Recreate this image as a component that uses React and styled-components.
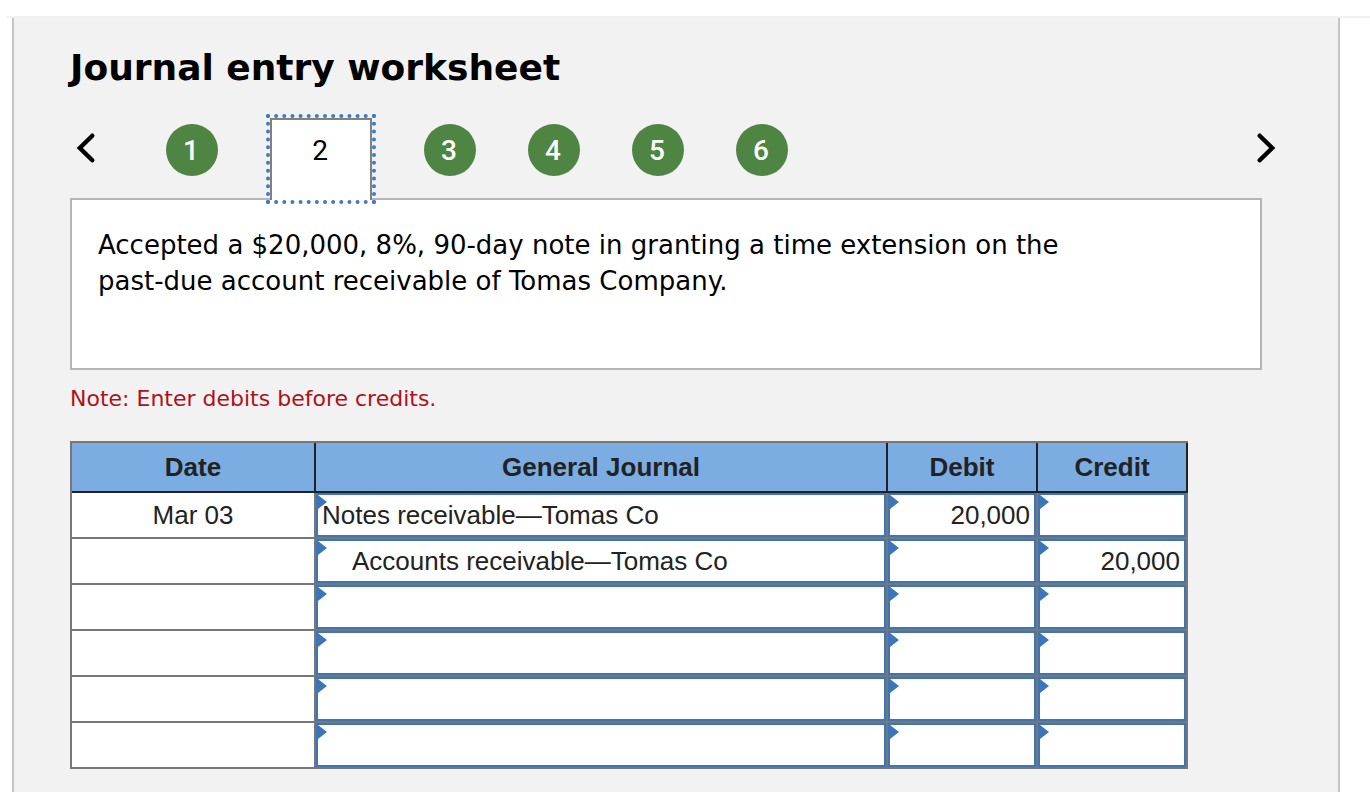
import React, { useState } from "react"
import styled, { createGlobalStyle } from "styled-components"

const steps = [1, 2, 3, 4, 5, 6]

const initialRows = [
  { date: "Mar 03", account: "Notes receivable—Tomas Co", debit: "20,000", credit: "" },
  { date: "", account: "Accounts receivable—Tomas Co", indent: true, debit: "", credit: "20,000" },
  { date: "", account: "", debit: "", credit: "" },
  { date: "", account: "", debit: "", credit: "" },
  { date: "", account: "", debit: "", credit: "" },
  { date: "", account: "", debit: "", credit: "" },
]

const App = () => {
  const [current, setCurrent] = useState(2)
  const [rows, setRows] = useState(initialRows)

  const update = (index, field, value) =>
    setRows(rows.map((row, i) => (i === index ? { ...row, [field]: value } : row)))

  return (
    <>
      <GlobalStyle />
      <TopRule />
      <Panel>
        <Heading>Journal entry worksheet</Heading>
        <StepBar aria-label="Transactions">
          <ArrowButton
            type="button"
            aria-label="Previous"
            onClick={() => setCurrent(Math.max(1, current - 1))}
          >
            <Arrow viewBox="0 0 20 32">
              <path d="M16.3 3.7 L3.8 16 L16.3 28.3" />
            </Arrow>
          </ArrowButton>
          {steps.map((step) =>
            step === current ? (
              <ActiveStep key={step} type="button" aria-current="step">
                {step}
              </ActiveStep>
            ) : (
              <Step key={step} type="button" onClick={() => setCurrent(step)}>
                {step}
              </Step>
            )
          )}
          <ArrowButton
            $end
            type="button"
            aria-label="Next"
            onClick={() => setCurrent(Math.min(steps.length, current + 1))}
          >
            <Arrow viewBox="0 0 20 32">
              <path d="M3.7 3.7 L16.2 16 L3.7 28.3" />
            </Arrow>
          </ArrowButton>
        </StepBar>
        <Prompt>
          <PromptText>
            Accepted a $20,000, 8%, 90-day note in granting a time extension on the
            past-due account receivable of Tomas Company.
          </PromptText>
        </Prompt>
        <Note>Note: Enter debits before credits.</Note>
        <Table>
          <colgroup>
            <Col $width="244px" />
            <Col />
            <Col $width="150px" />
            <Col $width="150px" />
          </colgroup>
          <thead>
            <tr>
              <HeadCell>Date</HeadCell>
              <HeadCell>General Journal</HeadCell>
              <HeadCell>Debit</HeadCell>
              <HeadCell>Credit</HeadCell>
            </tr>
          </thead>
          <tbody>
            {rows.map((row, index) => (
              <tr key={index}>
                <DateCell>{row.date}</DateCell>
                <EntryCell>
                  <EntryInput
                    aria-label={`General journal, line ${index + 1}`}
                    value={row.account}
                    $indent={row.indent}
                    onChange={(e) => update(index, "account", e.target.value)}
                  />
                </EntryCell>
                <EntryCell>
                  <EntryInput
                    $amount
                    aria-label={`Debit, line ${index + 1}`}
                    value={row.debit}
                    onChange={(e) => update(index, "debit", e.target.value)}
                  />
                </EntryCell>
                <EntryCell>
                  <EntryInput
                    $amount
                    aria-label={`Credit, line ${index + 1}`}
                    value={row.credit}
                    onChange={(e) => update(index, "credit", e.target.value)}
                  />
                </EntryCell>
              </tr>
            ))}
          </tbody>
        </Table>
      </Panel>
    </>
  )
}

export default App

const GlobalStyle = createGlobalStyle`
  * {
    box-sizing: border-box;
  }
  body {
    margin: 0;
    background: #fff;
    color: #000;
    font-family: Verdana, "DejaVu Sans", sans-serif;
  }
  #root {
    display: flex;
    flex-direction: column;
    min-height: 100vh;
    padding-top: 16px;
  }
`
const TopRule = styled.div`
  height: 2px;
  margin-left: 6px;
  background: #f1f1f1;
`
const Panel = styled.main`
  flex: 1;
  margin: 0 30px 0 12px;
  padding: 26px 76px 23px 56px;
  background: #f2f2f2;
  border: solid #c4c4c4;
  border-width: 0 2px;
`
const Heading = styled.h1`
  margin: 0 0 26px;
  font-size: 36px;
  line-height: 48px;
`
const StepBar = styled.nav`
  display: flex;
  align-items: flex-start;
  gap: 52px;
  height: 80px;
  margin-right: -20px;
`
const ArrowButton = styled.button`
  display: flex;
  align-items: center;
  justify-content: ${(props) => (props.$end ? "flex-end" : "flex-start")};
  width: 44px;
  height: 60px;
  margin-left: ${(props) => (props.$end ? "auto" : "0")};
  padding: 0 6px;
  border: 0;
  background: none;
  cursor: pointer;
`
const Arrow = styled.svg`
  width: 20px;
  height: 32px;
  flex: none;
  fill: none;
  stroke: #000;
  stroke-width: 4.4;
  stroke-linecap: round;
`
const Step = styled.button`
  width: 52px;
  height: 52px;
  margin-top: 6px;
  padding: 0 2px 0 0;
  border: 0;
  border-radius: 50%;
  background: #4e8542;
  color: #fff;
  font: 500 28px Roboto, Arial, sans-serif;
  cursor: pointer;
`
const ActiveStep = styled(Step)`
  position: relative;
  z-index: 1;
  width: 102px;
  height: 82px;
  margin-top: 0;
  padding: 0 2px 20px 0;
  border: 2px solid #808080;
  border-bottom: 0;
  border-radius: 0;
  background: #fff;
  color: #000;
  font-weight: 400;
  outline: 4px dotted #3f7bc1;
`
const Prompt = styled.section`
  min-height: 172px;
  padding: 27px 26px;
  border: 2px solid #b5b5b5;
  background: #fff;
`
const PromptText = styled.p`
  max-width: 1020px;
  margin: 0;
  font-size: 26px;
  line-height: 36px;
`
const Note = styled.p`
  margin: 15px 0 28px;
  color: #b0101a;
  font-size: 22px;
  line-height: 28px;
`
const Table = styled.table`
  width: 100%;
  max-width: 1118px;
  table-layout: fixed;
  border-collapse: separate;
  border-spacing: 0;
  border: solid #777;
  border-width: 2px 0 0 2px;
  color: #222;
  font: 26px "Liberation Sans", Arial, sans-serif;
`
const Col = styled.col`
  width: ${(props) => props.$width || "auto"};
`
const HeadCell = styled.th`
  height: 50px;
  padding: 0;
  border: solid #222;
  border-width: 0 2px 2px 0;
  background: #7bace2;
`
const DateCell = styled.td`
  height: 46px;
  padding: 0;
  border: solid #777;
  border-width: 0 2px 2px 0;
  background: #fff;
  text-align: center;
`
const EntryCell = styled(DateCell)`
  position: relative;

  &::before {
    content: "";
    position: absolute;
    top: 2px;
    left: 2px;
    border: solid transparent;
    border-width: 7px 0 7px 9px;
    border-left-color: #3c76b8;
    pointer-events: none;
  }
`
const EntryInput = styled.input`
  display: block;
  width: 100%;
  height: 44px;
  padding: 0 4px 0 ${(props) => (props.$indent ? "34px" : "4px")};
  border: 2px solid #3c76b8;
  border-radius: 0;
  outline: 0;
  background: #fff;
  color: inherit;
  font: inherit;
  text-align: ${(props) => (props.$amount ? "right" : "left")};
`
